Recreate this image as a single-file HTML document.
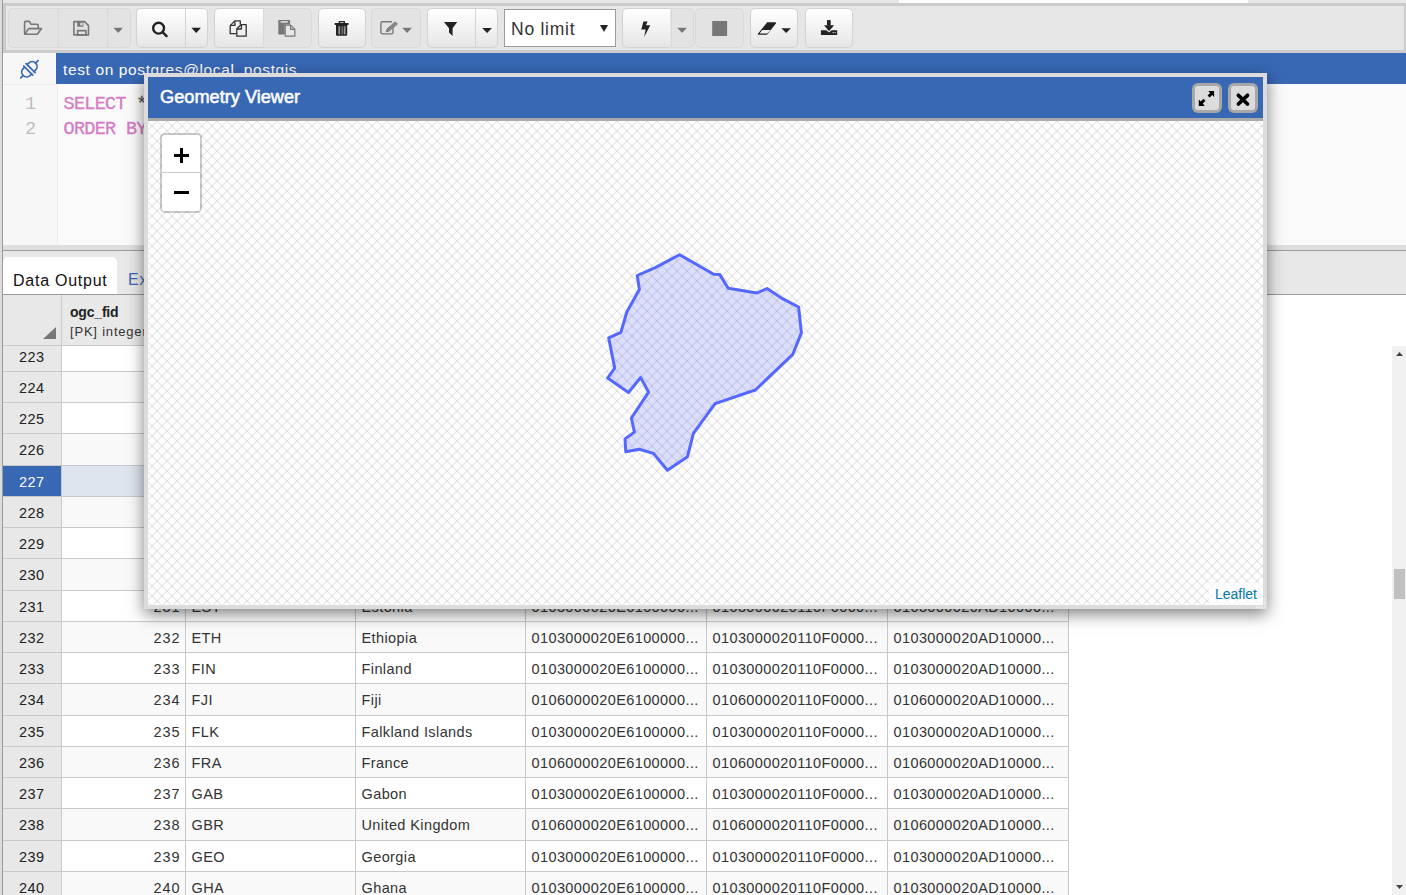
<!DOCTYPE html><html><head><meta charset='utf-8'><style>
*{box-sizing:border-box;margin:0;padding:0}
html,body{width:1406px;height:895px;overflow:hidden;background:#fff;font-family:"Liberation Sans",sans-serif;position:relative}
.a{position:absolute}
.btn{position:absolute;top:8px;height:39.5px;border:1px solid #d2d2d2;}
.en{background:linear-gradient(#ffffff,#e6e6e6);}
.dis{background:#e3e3e3;border-color:#d9d9d9}
.cell{position:absolute;height:31.25px;border-right:1px solid #c9c9c9;border-bottom:1px solid #c9c9c9;font-size:14.5px;color:#333;white-space:nowrap;overflow:hidden;line-height:32px;letter-spacing:0.4px}
</style></head><body><div class="a" style="left:0;top:0;width:1406px;height:3px;background:#e6e6e6"></div>
<div class="a" style="left:899px;top:0;width:349px;height:3px;background:#fff"></div>
<div class="a" style="left:0;top:0;width:2px;height:895px;background:#dcdcdc"></div>
<div class="a" style="left:2px;top:0;width:1px;height:895px;background:#9a9a9a"></div>
<div class="a" style="left:3px;top:3px;width:1403px;height:50px;background:#e6e6e6;border:3px solid #cbcbcb;border-right-width:2px"></div>
<div class="btn dis" style="left:8px;width:49.5px;border-radius:5px 0 0 5px;border-right:none"></div>
<div class="btn dis" style="left:57.5px;width:49.0px;border-radius:0;border-right:none"></div>
<div class="btn dis" style="left:106.5px;width:24.0px;border-radius:0 5px 5px 0;"></div>
<div class="btn en" style="left:136px;width:48.5px;border-radius:5px 0 0 5px;border-right:none"></div>
<div class="btn en" style="left:184.5px;width:23.5px;border-radius:0 5px 5px 0;"></div>
<div class="btn en" style="left:214px;width:48.5px;border-radius:5px 0 0 5px;border-right:none"></div>
<div class="btn dis" style="left:262.5px;width:49.0px;border-radius:0 5px 5px 0;"></div>
<div class="btn en" style="left:318px;width:48px;border-radius:5px;"></div>
<div class="btn dis" style="left:371px;width:49.5px;border-radius:5px;"></div>
<div class="btn en" style="left:426.5px;width:48.30000000000001px;border-radius:5px 0 0 5px;border-right:none"></div>
<div class="btn en" style="left:474.8px;width:23.399999999999977px;border-radius:0 5px 5px 0;"></div>
<div class="a" style="left:504px;top:9px;width:112px;height:38px;background:#fff;border:1px solid #9c9c9c"></div>
<div class="a" style="left:511px;top:18.7px;font-size:17.5px;line-height:20px;color:#333;letter-spacing:0.75px">No limit</div>
<svg class="a" style="left:600px;top:25px" width="8" height="7"><path d="M0 0H8L4 7Z" fill="#222"/></svg>
<div class="btn en" style="left:621.8px;width:48.700000000000045px;border-radius:5px 0 0 5px;border-right:none"></div>
<div class="btn dis" style="left:670.5px;width:23.700000000000045px;border-radius:0 5px 5px 0;"></div>
<div class="btn dis" style="left:695.4px;width:48.89999999999998px;border-radius:5px;"></div>
<div class="btn en" style="left:749.8px;width:48.30000000000007px;border-radius:5px;"></div>
<div class="btn en" style="left:804.9px;width:48.39999999999998px;border-radius:5px;"></div>
<svg class="a" style="left:0;top:0" width="1406" height="60" viewBox="0 0 1406 60">
<g fill="none" stroke="#777" stroke-width="1.6" stroke-linejoin="round" stroke-linecap="round">
 <path d="M24.6 33.6V22.6Q24.6 21.4 25.8 21.4H29.4L30.9 24.2H37Q38.2 24.2 38.2 25.4V28.2"/>
 <path d="M24.8 34.2L28.6 28.6H41.6L37.3 34.2Z"/>
 <path d="M73.9 21.6H84.6L88.5 25.6V34.9H73.9Z"/>
 <path d="M77.6 30.6H85.9V34.9H77.6Z"/>
</g>
<g fill="#777">
 <path d="M77.2 21.4H83.4V26.7H77.2ZM80.3 22.4V25.6H82.6V22.4Z" fill-rule="evenodd"/>
 <path d="M113.5 27.8H122.9L118.2 32.9Z"/>
 <path d="M402.3 27.8H411.9L407.1 32.9Z"/>
 <path d="M677.3 27.8H686.9L682.1 32.9Z"/>
 <rect x="712.2" y="21" width="14.9" height="15"/>
</g>
<g fill="#222">
 <path d="M191.4 27.8H201L196.2 32.9Z"/>
 <path d="M482.2 28H492L487.1 33Z"/>
 <path d="M781.4 28.2H790.9L786.15 32.9Z"/>
</g>
<g fill="none" stroke="#222" stroke-width="2.4" stroke-linecap="round">
 <circle cx="158.6" cy="28.2" r="5.4"/>
 <path d="M162.8 32.4L166.6 36.2"/>
</g>
<g fill="none" stroke="#333" stroke-width="1.3" stroke-linejoin="round">
 <path d="M236.4 33.7H230.2V25.6L234.8 20.9H240.3V24.6"/>
 <path d="M230.4 25.4H234.9V21"/>
 <path d="M236.8 28.8L241.3 24.6H246.2V36.2H236.8Z"/>
 <path d="M236.9 29H241.4V24.7"/>
</g>
<g>
 <path d="M278.3 20.6Q278.3 20.1 278.8 20.1H289.6Q290.1 20.1 290.1 20.6V24.6H284.7V34.5H278.8Q278.3 34.5 278.3 34Z" fill="#777"/>
 <rect x="280.7" y="21.1" width="7.2" height="1.6" fill="#ddd"/>
 <path d="M285.2 25.1H290.6L294.9 29.4V36.1H285.2Z" fill="#e6e6e6" stroke="#777" stroke-width="1.2" stroke-linejoin="round"/>
 <path d="M290.6 25.1V29.4H294.9" fill="none" stroke="#777" stroke-width="1.2"/>
</g>
<g fill="#222">
 <path d="M334.7 23H338.6V21.6Q338.6 21.1 339.1 21.1H344.5Q345 21.1 345 21.6V23H348.5V24.9H334.7Z"/>
 <rect x="340" y="22" width="3.6" height="1" fill="#bbb"/>
 <path d="M336 24.9H347.2V34.8Q347.2 35.8 346.2 35.8H337Q336 35.8 336 34.8Z"/>
 <rect x="338.4" y="26.2" width="1.7" height="8.2" fill="#999"/>
 <rect x="341.6" y="26.2" width="1" height="8.2" fill="#999"/>
 <rect x="343.8" y="26.2" width="1.7" height="8.2" fill="#999"/>
</g>
<g fill="none" stroke="#777" stroke-width="1.4" stroke-linecap="round" stroke-linejoin="round">
 <path d="M391.5 21.8H382.6Q380.9 21.8 380.9 23.5V32.2Q380.9 33.9 382.6 33.9H391.3Q393 33.9 393 32.2V28.8"/>
</g>
<path d="M386.2 31.9L387.1 28.8L395.3 21.9L397.4 24.1L389.2 31.0Z" fill="#888" stroke="#777" stroke-width="0.9" stroke-linejoin="round"/>
<path d="M444 22.1H457.2L452.6 28.2V35.9L449 32.4V28.2Z" fill="#222"/>
<path d="M643.4 21.4H647.6L646 25.3H650.3L644.1 36.9L645.6 29.4H641.3Z" fill="#222"/>
<path d="M767.2 22.3H775.2Q776.6 22.3 775.9 23.4L767 34.7H759Q757.3 34.7 758.1 33.6Z" fill="#222"/>
<path d="M762.3 29.9H770.8L767.1 33.5H759.5Z" fill="#f2f2f2"/>
<g fill="#222">
 <rect x="827" y="20.1" width="3.7" height="5.5"/>
 <path d="M824 25.2H834.1L829 31.2Z"/>
 <path d="M820.9 30.2H826.3L829 32.6L831.7 30.2H837.2V34.9H820.9Z"/>
 <rect x="832.6" y="32" width="1.2" height="1.2" fill="#ccc"/>
 <rect x="834.6" y="32" width="1.2" height="1.2" fill="#ccc"/>
</g>
</svg>
<div class="a" style="left:3px;top:53px;width:1403px;height:192px;background:#fafafa"></div>
<div class="a" style="left:3px;top:53px;width:55px;height:192px;background:#f7f7f7;border-right:1px solid #ececec"></div>
<div class="a" style="left:56px;top:53px;width:1350px;height:31px;background:#3867b4"></div>
<div class="a" style="left:63px;top:60px;font-size:15.5px;color:#fff;letter-spacing:0.62px;line-height:20px">test on postgres@local_postgis</div>
<div class="a" style="left:3px;top:84px;width:54px;height:1px;background:#ececec"></div>
<div class="a" style="left:25px;top:91.5px;font-family:'Liberation Mono';font-size:18.5px;line-height:25px;color:#bdbdbd">1<br>2</div>
<div class="a" style="left:63.5px;top:91.5px;font-family:'Liberation Mono';font-size:18.5px;letter-spacing:-0.7px;line-height:25px;color:#d57ac5;-webkit-text-stroke:0.3px #d57ac5;white-space:pre">SELECT <span style="color:#555;-webkit-text-stroke:0.3px #555">*</span><br>ORDER BY</div>
<svg class="a" style="left:15px;top:55px" width="30" height="30" viewBox="15 55 30 30">
<g transform="translate(29.4,69.3) rotate(-45)" fill="none" stroke="#3867b4" stroke-width="1.7" stroke-linecap="round">
 <path d="M1.7 -4.9H3.9A4.9 4.9 0 0 1 3.9 4.9H1.7"/>
 <path d="M-1.7 -4.9H-3.9A4.9 4.9 0 0 0 -3.9 4.9H-1.7"/>
 <path d="M1.7 -6.4V6.4M-1.7 -6.4V6.4"/>
 <path d="M8.8 0H12.2M-8.8 0H-12.2"/>
</g></svg>
<div class="a" style="left:3px;top:245px;width:1403px;height:5px;background:#dedede"></div>
<div class="a" style="left:3px;top:250px;width:1403px;height:1px;background:#9a9a9a"></div>
<div class="a" style="left:3px;top:251px;width:1403px;height:43px;background:#e8e8e8"></div>
<div class="a" style="left:3px;top:257px;width:114px;height:37px;background:#fff;border-radius:5px 5px 0 0"></div>
<div class="a" style="left:13px;top:270.8px;font-size:16px;color:#111;letter-spacing:0.75px;line-height:20px">Data Output</div>
<div class="a" style="left:128px;top:269.5px;font-size:16px;color:#3867b4;letter-spacing:0.75px;line-height:20px">Explain</div>
<div class="a" style="left:3px;top:294px;width:1403px;height:1px;background:#9a9a9a"></div>
<div class="a" style="left:3px;top:295px;width:1065.5px;height:50.5px;background:#e8e8e8;border-bottom:1px solid #c9c9c9"></div>
<div class="a" style="left:61px;top:295px;width:1px;height:50px;background:#c9c9c9"></div>
<div class="a" style="left:185px;top:295px;width:1px;height:50px;background:#c9c9c9"></div>
<div class="a" style="left:355px;top:295px;width:1px;height:50px;background:#c9c9c9"></div>
<div class="a" style="left:525px;top:295px;width:1px;height:50px;background:#c9c9c9"></div>
<div class="a" style="left:706px;top:295px;width:1px;height:50px;background:#c9c9c9"></div>
<div class="a" style="left:887px;top:295px;width:1px;height:50px;background:#c9c9c9"></div>
<div class="a" style="left:1068px;top:295px;width:1px;height:50px;background:#c9c9c9"></div>
<svg class="a" style="left:43px;top:327px" width="13" height="12"><path d="M13 0V12H0Z" fill="#777"/></svg>
<div class="a" style="left:70px;top:303px;font-size:14px;font-weight:bold;color:#222;line-height:18px;letter-spacing:-0.2px">ogc_fid</div>
<div class="a" style="left:70px;top:323px;font-size:13px;color:#333;line-height:18px;letter-spacing:0.8px">[PK] integer</div>
<div class="a" style="left:3px;top:346px;width:1066px;height:549px;overflow:hidden">
<div class="cell" style="left:0;top:-5.399999999999977px;width:58.5px;background:#e8e8e8;color:#222;text-align:center">223</div>
<div class="cell" style="left:58.5px;top:-5.399999999999977px;width:124.0px;background:#fff;text-align:right;padding-right:4px;letter-spacing:0.9px"></div>
<div class="cell" style="left:182.5px;top:-5.399999999999977px;width:170.0px;background:#fff;text-align:left;padding-left:6px"></div>
<div class="cell" style="left:352.5px;top:-5.399999999999977px;width:170.0px;background:#fff;text-align:left;padding-left:6px"></div>
<div class="cell" style="left:522.5px;top:-5.399999999999977px;width:181.0px;background:#fff;text-align:left;padding-left:6px"></div>
<div class="cell" style="left:703.5px;top:-5.399999999999977px;width:181.0px;background:#fff;text-align:left;padding-left:6px"></div>
<div class="cell" style="left:884.5px;top:-5.399999999999977px;width:181.0px;background:#fff;text-align:left;padding-left:6px"></div>
<div class="cell" style="left:0;top:25.850000000000023px;width:58.5px;background:#e8e8e8;color:#222;text-align:center">224</div>
<div class="cell" style="left:58.5px;top:25.850000000000023px;width:124.0px;background:#f9f9f9;text-align:right;padding-right:4px;letter-spacing:0.9px"></div>
<div class="cell" style="left:182.5px;top:25.850000000000023px;width:170.0px;background:#f9f9f9;text-align:left;padding-left:6px"></div>
<div class="cell" style="left:352.5px;top:25.850000000000023px;width:170.0px;background:#f9f9f9;text-align:left;padding-left:6px"></div>
<div class="cell" style="left:522.5px;top:25.850000000000023px;width:181.0px;background:#f9f9f9;text-align:left;padding-left:6px"></div>
<div class="cell" style="left:703.5px;top:25.850000000000023px;width:181.0px;background:#f9f9f9;text-align:left;padding-left:6px"></div>
<div class="cell" style="left:884.5px;top:25.850000000000023px;width:181.0px;background:#f9f9f9;text-align:left;padding-left:6px"></div>
<div class="cell" style="left:0;top:57.10000000000002px;width:58.5px;background:#e8e8e8;color:#222;text-align:center">225</div>
<div class="cell" style="left:58.5px;top:57.10000000000002px;width:124.0px;background:#fff;text-align:right;padding-right:4px;letter-spacing:0.9px"></div>
<div class="cell" style="left:182.5px;top:57.10000000000002px;width:170.0px;background:#fff;text-align:left;padding-left:6px"></div>
<div class="cell" style="left:352.5px;top:57.10000000000002px;width:170.0px;background:#fff;text-align:left;padding-left:6px"></div>
<div class="cell" style="left:522.5px;top:57.10000000000002px;width:181.0px;background:#fff;text-align:left;padding-left:6px"></div>
<div class="cell" style="left:703.5px;top:57.10000000000002px;width:181.0px;background:#fff;text-align:left;padding-left:6px"></div>
<div class="cell" style="left:884.5px;top:57.10000000000002px;width:181.0px;background:#fff;text-align:left;padding-left:6px"></div>
<div class="cell" style="left:0;top:88.35000000000002px;width:58.5px;background:#e8e8e8;color:#222;text-align:center">226</div>
<div class="cell" style="left:58.5px;top:88.35000000000002px;width:124.0px;background:#f9f9f9;text-align:right;padding-right:4px;letter-spacing:0.9px"></div>
<div class="cell" style="left:182.5px;top:88.35000000000002px;width:170.0px;background:#f9f9f9;text-align:left;padding-left:6px"></div>
<div class="cell" style="left:352.5px;top:88.35000000000002px;width:170.0px;background:#f9f9f9;text-align:left;padding-left:6px"></div>
<div class="cell" style="left:522.5px;top:88.35000000000002px;width:181.0px;background:#f9f9f9;text-align:left;padding-left:6px"></div>
<div class="cell" style="left:703.5px;top:88.35000000000002px;width:181.0px;background:#f9f9f9;text-align:left;padding-left:6px"></div>
<div class="cell" style="left:884.5px;top:88.35000000000002px;width:181.0px;background:#f9f9f9;text-align:left;padding-left:6px"></div>
<div class="cell" style="left:0;top:119.60000000000002px;width:58.5px;background:#3867b4;color:#fff;text-align:center">227</div>
<div class="cell" style="left:58.5px;top:119.60000000000002px;width:124.0px;background:#dfe5ef;text-align:right;padding-right:4px;letter-spacing:0.9px"></div>
<div class="cell" style="left:182.5px;top:119.60000000000002px;width:170.0px;background:#dfe5ef;text-align:left;padding-left:6px"></div>
<div class="cell" style="left:352.5px;top:119.60000000000002px;width:170.0px;background:#dfe5ef;text-align:left;padding-left:6px"></div>
<div class="cell" style="left:522.5px;top:119.60000000000002px;width:181.0px;background:#dfe5ef;text-align:left;padding-left:6px"></div>
<div class="cell" style="left:703.5px;top:119.60000000000002px;width:181.0px;background:#dfe5ef;text-align:left;padding-left:6px"></div>
<div class="cell" style="left:884.5px;top:119.60000000000002px;width:181.0px;background:#dfe5ef;text-align:left;padding-left:6px"></div>
<div class="cell" style="left:0;top:150.85000000000002px;width:58.5px;background:#e8e8e8;color:#222;text-align:center">228</div>
<div class="cell" style="left:58.5px;top:150.85000000000002px;width:124.0px;background:#f9f9f9;text-align:right;padding-right:4px;letter-spacing:0.9px"></div>
<div class="cell" style="left:182.5px;top:150.85000000000002px;width:170.0px;background:#f9f9f9;text-align:left;padding-left:6px"></div>
<div class="cell" style="left:352.5px;top:150.85000000000002px;width:170.0px;background:#f9f9f9;text-align:left;padding-left:6px"></div>
<div class="cell" style="left:522.5px;top:150.85000000000002px;width:181.0px;background:#f9f9f9;text-align:left;padding-left:6px"></div>
<div class="cell" style="left:703.5px;top:150.85000000000002px;width:181.0px;background:#f9f9f9;text-align:left;padding-left:6px"></div>
<div class="cell" style="left:884.5px;top:150.85000000000002px;width:181.0px;background:#f9f9f9;text-align:left;padding-left:6px"></div>
<div class="cell" style="left:0;top:182.10000000000002px;width:58.5px;background:#e8e8e8;color:#222;text-align:center">229</div>
<div class="cell" style="left:58.5px;top:182.10000000000002px;width:124.0px;background:#fff;text-align:right;padding-right:4px;letter-spacing:0.9px"></div>
<div class="cell" style="left:182.5px;top:182.10000000000002px;width:170.0px;background:#fff;text-align:left;padding-left:6px"></div>
<div class="cell" style="left:352.5px;top:182.10000000000002px;width:170.0px;background:#fff;text-align:left;padding-left:6px"></div>
<div class="cell" style="left:522.5px;top:182.10000000000002px;width:181.0px;background:#fff;text-align:left;padding-left:6px"></div>
<div class="cell" style="left:703.5px;top:182.10000000000002px;width:181.0px;background:#fff;text-align:left;padding-left:6px"></div>
<div class="cell" style="left:884.5px;top:182.10000000000002px;width:181.0px;background:#fff;text-align:left;padding-left:6px"></div>
<div class="cell" style="left:0;top:213.35000000000002px;width:58.5px;background:#e8e8e8;color:#222;text-align:center">230</div>
<div class="cell" style="left:58.5px;top:213.35000000000002px;width:124.0px;background:#f9f9f9;text-align:right;padding-right:4px;letter-spacing:0.9px"></div>
<div class="cell" style="left:182.5px;top:213.35000000000002px;width:170.0px;background:#f9f9f9;text-align:left;padding-left:6px"></div>
<div class="cell" style="left:352.5px;top:213.35000000000002px;width:170.0px;background:#f9f9f9;text-align:left;padding-left:6px"></div>
<div class="cell" style="left:522.5px;top:213.35000000000002px;width:181.0px;background:#f9f9f9;text-align:left;padding-left:6px"></div>
<div class="cell" style="left:703.5px;top:213.35000000000002px;width:181.0px;background:#f9f9f9;text-align:left;padding-left:6px"></div>
<div class="cell" style="left:884.5px;top:213.35000000000002px;width:181.0px;background:#f9f9f9;text-align:left;padding-left:6px"></div>
<div class="cell" style="left:0;top:244.60000000000002px;width:58.5px;background:#e8e8e8;color:#222;text-align:center">231</div>
<div class="cell" style="left:58.5px;top:244.60000000000002px;width:124.0px;background:#fff;text-align:right;padding-right:4px;letter-spacing:0.9px">231</div>
<div class="cell" style="left:182.5px;top:244.60000000000002px;width:170.0px;background:#fff;text-align:left;padding-left:6px">EST</div>
<div class="cell" style="left:352.5px;top:244.60000000000002px;width:170.0px;background:#fff;text-align:left;padding-left:6px">Estonia</div>
<div class="cell" style="left:522.5px;top:244.60000000000002px;width:181.0px;background:#fff;text-align:left;padding-left:6px">0103000020E6100000...</div>
<div class="cell" style="left:703.5px;top:244.60000000000002px;width:181.0px;background:#fff;text-align:left;padding-left:6px">0103000020110F0000...</div>
<div class="cell" style="left:884.5px;top:244.60000000000002px;width:181.0px;background:#fff;text-align:left;padding-left:6px">0103000020AD10000...</div>
<div class="cell" style="left:0;top:275.85px;width:58.5px;background:#e8e8e8;color:#222;text-align:center">232</div>
<div class="cell" style="left:58.5px;top:275.85px;width:124.0px;background:#f9f9f9;text-align:right;padding-right:4px;letter-spacing:0.9px">232</div>
<div class="cell" style="left:182.5px;top:275.85px;width:170.0px;background:#f9f9f9;text-align:left;padding-left:6px">ETH</div>
<div class="cell" style="left:352.5px;top:275.85px;width:170.0px;background:#f9f9f9;text-align:left;padding-left:6px">Ethiopia</div>
<div class="cell" style="left:522.5px;top:275.85px;width:181.0px;background:#f9f9f9;text-align:left;padding-left:6px">0103000020E6100000...</div>
<div class="cell" style="left:703.5px;top:275.85px;width:181.0px;background:#f9f9f9;text-align:left;padding-left:6px">0103000020110F0000...</div>
<div class="cell" style="left:884.5px;top:275.85px;width:181.0px;background:#f9f9f9;text-align:left;padding-left:6px">0103000020AD10000...</div>
<div class="cell" style="left:0;top:307.1px;width:58.5px;background:#e8e8e8;color:#222;text-align:center">233</div>
<div class="cell" style="left:58.5px;top:307.1px;width:124.0px;background:#fff;text-align:right;padding-right:4px;letter-spacing:0.9px">233</div>
<div class="cell" style="left:182.5px;top:307.1px;width:170.0px;background:#fff;text-align:left;padding-left:6px">FIN</div>
<div class="cell" style="left:352.5px;top:307.1px;width:170.0px;background:#fff;text-align:left;padding-left:6px">Finland</div>
<div class="cell" style="left:522.5px;top:307.1px;width:181.0px;background:#fff;text-align:left;padding-left:6px">0103000020E6100000...</div>
<div class="cell" style="left:703.5px;top:307.1px;width:181.0px;background:#fff;text-align:left;padding-left:6px">0103000020110F0000...</div>
<div class="cell" style="left:884.5px;top:307.1px;width:181.0px;background:#fff;text-align:left;padding-left:6px">0103000020AD10000...</div>
<div class="cell" style="left:0;top:338.35px;width:58.5px;background:#e8e8e8;color:#222;text-align:center">234</div>
<div class="cell" style="left:58.5px;top:338.35px;width:124.0px;background:#f9f9f9;text-align:right;padding-right:4px;letter-spacing:0.9px">234</div>
<div class="cell" style="left:182.5px;top:338.35px;width:170.0px;background:#f9f9f9;text-align:left;padding-left:6px">FJI</div>
<div class="cell" style="left:352.5px;top:338.35px;width:170.0px;background:#f9f9f9;text-align:left;padding-left:6px">Fiji</div>
<div class="cell" style="left:522.5px;top:338.35px;width:181.0px;background:#f9f9f9;text-align:left;padding-left:6px">0106000020E6100000...</div>
<div class="cell" style="left:703.5px;top:338.35px;width:181.0px;background:#f9f9f9;text-align:left;padding-left:6px">0106000020110F0000...</div>
<div class="cell" style="left:884.5px;top:338.35px;width:181.0px;background:#f9f9f9;text-align:left;padding-left:6px">0106000020AD10000...</div>
<div class="cell" style="left:0;top:369.6px;width:58.5px;background:#e8e8e8;color:#222;text-align:center">235</div>
<div class="cell" style="left:58.5px;top:369.6px;width:124.0px;background:#fff;text-align:right;padding-right:4px;letter-spacing:0.9px">235</div>
<div class="cell" style="left:182.5px;top:369.6px;width:170.0px;background:#fff;text-align:left;padding-left:6px">FLK</div>
<div class="cell" style="left:352.5px;top:369.6px;width:170.0px;background:#fff;text-align:left;padding-left:6px">Falkland Islands</div>
<div class="cell" style="left:522.5px;top:369.6px;width:181.0px;background:#fff;text-align:left;padding-left:6px">0103000020E6100000...</div>
<div class="cell" style="left:703.5px;top:369.6px;width:181.0px;background:#fff;text-align:left;padding-left:6px">0103000020110F0000...</div>
<div class="cell" style="left:884.5px;top:369.6px;width:181.0px;background:#fff;text-align:left;padding-left:6px">0103000020AD10000...</div>
<div class="cell" style="left:0;top:400.85px;width:58.5px;background:#e8e8e8;color:#222;text-align:center">236</div>
<div class="cell" style="left:58.5px;top:400.85px;width:124.0px;background:#f9f9f9;text-align:right;padding-right:4px;letter-spacing:0.9px">236</div>
<div class="cell" style="left:182.5px;top:400.85px;width:170.0px;background:#f9f9f9;text-align:left;padding-left:6px">FRA</div>
<div class="cell" style="left:352.5px;top:400.85px;width:170.0px;background:#f9f9f9;text-align:left;padding-left:6px">France</div>
<div class="cell" style="left:522.5px;top:400.85px;width:181.0px;background:#f9f9f9;text-align:left;padding-left:6px">0106000020E6100000...</div>
<div class="cell" style="left:703.5px;top:400.85px;width:181.0px;background:#f9f9f9;text-align:left;padding-left:6px">0106000020110F0000...</div>
<div class="cell" style="left:884.5px;top:400.85px;width:181.0px;background:#f9f9f9;text-align:left;padding-left:6px">0106000020AD10000...</div>
<div class="cell" style="left:0;top:432.1px;width:58.5px;background:#e8e8e8;color:#222;text-align:center">237</div>
<div class="cell" style="left:58.5px;top:432.1px;width:124.0px;background:#fff;text-align:right;padding-right:4px;letter-spacing:0.9px">237</div>
<div class="cell" style="left:182.5px;top:432.1px;width:170.0px;background:#fff;text-align:left;padding-left:6px">GAB</div>
<div class="cell" style="left:352.5px;top:432.1px;width:170.0px;background:#fff;text-align:left;padding-left:6px">Gabon</div>
<div class="cell" style="left:522.5px;top:432.1px;width:181.0px;background:#fff;text-align:left;padding-left:6px">0103000020E6100000...</div>
<div class="cell" style="left:703.5px;top:432.1px;width:181.0px;background:#fff;text-align:left;padding-left:6px">0103000020110F0000...</div>
<div class="cell" style="left:884.5px;top:432.1px;width:181.0px;background:#fff;text-align:left;padding-left:6px">0103000020AD10000...</div>
<div class="cell" style="left:0;top:463.35px;width:58.5px;background:#e8e8e8;color:#222;text-align:center">238</div>
<div class="cell" style="left:58.5px;top:463.35px;width:124.0px;background:#f9f9f9;text-align:right;padding-right:4px;letter-spacing:0.9px">238</div>
<div class="cell" style="left:182.5px;top:463.35px;width:170.0px;background:#f9f9f9;text-align:left;padding-left:6px">GBR</div>
<div class="cell" style="left:352.5px;top:463.35px;width:170.0px;background:#f9f9f9;text-align:left;padding-left:6px">United Kingdom</div>
<div class="cell" style="left:522.5px;top:463.35px;width:181.0px;background:#f9f9f9;text-align:left;padding-left:6px">0106000020E6100000...</div>
<div class="cell" style="left:703.5px;top:463.35px;width:181.0px;background:#f9f9f9;text-align:left;padding-left:6px">0106000020110F0000...</div>
<div class="cell" style="left:884.5px;top:463.35px;width:181.0px;background:#f9f9f9;text-align:left;padding-left:6px">0106000020AD10000...</div>
<div class="cell" style="left:0;top:494.6px;width:58.5px;background:#e8e8e8;color:#222;text-align:center">239</div>
<div class="cell" style="left:58.5px;top:494.6px;width:124.0px;background:#fff;text-align:right;padding-right:4px;letter-spacing:0.9px">239</div>
<div class="cell" style="left:182.5px;top:494.6px;width:170.0px;background:#fff;text-align:left;padding-left:6px">GEO</div>
<div class="cell" style="left:352.5px;top:494.6px;width:170.0px;background:#fff;text-align:left;padding-left:6px">Georgia</div>
<div class="cell" style="left:522.5px;top:494.6px;width:181.0px;background:#fff;text-align:left;padding-left:6px">0103000020E6100000...</div>
<div class="cell" style="left:703.5px;top:494.6px;width:181.0px;background:#fff;text-align:left;padding-left:6px">0103000020110F0000...</div>
<div class="cell" style="left:884.5px;top:494.6px;width:181.0px;background:#fff;text-align:left;padding-left:6px">0103000020AD10000...</div>
<div class="cell" style="left:0;top:525.85px;width:58.5px;background:#e8e8e8;color:#222;text-align:center">240</div>
<div class="cell" style="left:58.5px;top:525.85px;width:124.0px;background:#f9f9f9;text-align:right;padding-right:4px;letter-spacing:0.9px">240</div>
<div class="cell" style="left:182.5px;top:525.85px;width:170.0px;background:#f9f9f9;text-align:left;padding-left:6px">GHA</div>
<div class="cell" style="left:352.5px;top:525.85px;width:170.0px;background:#f9f9f9;text-align:left;padding-left:6px">Ghana</div>
<div class="cell" style="left:522.5px;top:525.85px;width:181.0px;background:#f9f9f9;text-align:left;padding-left:6px">0103000020E6100000...</div>
<div class="cell" style="left:703.5px;top:525.85px;width:181.0px;background:#f9f9f9;text-align:left;padding-left:6px">0103000020110F0000...</div>
<div class="cell" style="left:884.5px;top:525.85px;width:181.0px;background:#f9f9f9;text-align:left;padding-left:6px">0103000020AD10000...</div>
</div>
<div class="a" style="left:1392px;top:346px;width:14px;height:549px;background:#f0f0f0"></div>
<svg class="a" style="left:1396px;top:352px" width="7" height="4"><path d="M0 4H7L3.5 0Z" fill="#444"/></svg>
<svg class="a" style="left:1396px;top:885px" width="7" height="4"><path d="M0 0H7L3.5 4Z" fill="#444"/></svg>
<div class="a" style="left:1394px;top:569px;width:11px;height:30px;background:#c1c1c1"></div>
<div class="a" style="left:144px;top:73px;width:1123px;height:536px;background:#dcdcdc;box-shadow:0 5px 15px rgba(0,0,0,0.5)"></div>
<div class="a" style="left:148px;top:77px;width:1115px;height:41px;background:#3867b4"></div>
<div class="a" style="left:160px;top:85px;font-size:18.2px;color:#fff;line-height:24px;-webkit-text-stroke:0.55px #fff">Geometry Viewer</div>
<div class="a" style="left:148px;top:118px;width:1115px;height:3px;background:#aaaaaa"></div>
<div class="a" style="left:1192px;top:83px;width:29.5px;height:29.5px;border:3px solid #a8a8a8;border-radius:6px;background:#dcdcdc"></div>
<div class="a" style="left:1228px;top:83px;width:29.5px;height:29.5px;border:3px solid #a8a8a8;border-radius:6px;background:#dcdcdc"></div>
<svg class="a" style="left:1180px;top:70px" width="90" height="50" viewBox="1180 70 90 50">
<g fill="#000">
 <path d="M1208.2 91H1214.1V96.9L1212.2 95L1209.6 97.6L1207.5 95.5L1210.1 92.9Z"/>
 <path d="M1198.8 99.5L1200.7 101.4L1203.4 98.7L1205.5 100.8L1202.8 103.5L1204.7 105.9H1198.8Z"/>
</g>
<path d="M1238.4 95.3L1247.5 104M1247.5 95.3L1238.4 104" stroke="#000" stroke-width="3.7" stroke-linecap="round"/>
</svg>
<svg class="a" style="left:1255px;top:597px" width="12" height="12"><g fill="#eeeeee"><rect x="1" y="9.5" width="1.5" height="2"/><rect x="3.5" y="9.5" width="1.5" height="2"/><rect x="6" y="9.5" width="1.5" height="2"/><rect x="8.5" y="9.5" width="1.5" height="2"/><rect x="9" y="1" width="1.5" height="1.5"/><rect x="9" y="4" width="1.5" height="1.5"/><rect x="9" y="6.5" width="1.5" height="1.5"/></g></svg>
<div class="a" style="left:148px;top:121px;width:1115px;height:484px;background:#fff;overflow:hidden">
<svg width="1115" height="484" style="position:absolute;left:0;top:0">
<defs><pattern id="h" x="4" y="5" width="10" height="10" patternUnits="userSpaceOnUse"><path d="M-10 -10L20 20M-10 0L10 20M0 -10L20 10" stroke="rgba(0,0,0,0.085)" stroke-width="1.3" fill="none"/><path d="M-10 20L20 -10M-10 10L10 -10M0 20L20 0" stroke="rgba(0,0,0,0.085)" stroke-width="1.3" fill="none"/></pattern></defs>
<rect width="1115" height="484" fill="url(#h)"/>
</svg>
<svg width="1115" height="484" style="position:absolute;left:0;top:0"><g transform="translate(-148,-121)"><polygon points="679.6,254.7 655.3,267.6 637.2,275.5 639.4,289.4 626.8,312 620.9,332.4 608.7,337.9 614.7,368.1 607.6,378 628.5,392.6 640.6,377.5 648.6,392.1 631.4,418 634.4,432.1 625,438.9 625.8,451.8 639.3,449.3 653.5,453.4 667.4,470.2 687.5,456.7 693.4,433.3 715.1,403.6 755.3,390 792.6,354.7 801.4,332.9 798.6,307 783,298.9 767.1,288.5 757,293 728.2,288.2 719.8,274.6 713.7,274.3" fill="rgba(51,68,255,0.17)" stroke="#5468ff" stroke-width="3" stroke-linejoin="round"/></g></svg>
<div style="position:absolute;left:12px;top:12px;width:42px;height:79.5px;border:2px solid rgba(0,0,0,0.2);border-radius:5px;background-clip:padding-box">
 <div style="position:absolute;left:0;top:0;width:38px;height:38px;background:#fff;border-bottom:1px solid #ccc;border-radius:3px 3px 0 0"></div>
 <div style="position:absolute;left:0;top:38px;width:38px;height:37.5px;background:#fff;border-radius:0 0 3px 3px"></div>
 <div style="position:absolute;left:11.6px;top:18.9px;width:15px;height:3px;background:#000"></div>
 <div style="position:absolute;left:17.7px;top:12.6px;width:3.2px;height:15.4px;background:#000"></div>
 <div style="position:absolute;left:11.6px;top:55.8px;width:15px;height:3.4px;background:#000"></div>
</div>
<div style="position:absolute;right:0;bottom:0;padding:0 6px 0 6px;height:22px;background:rgba(255,255,255,0.7);font-size:14px;line-height:22px;color:#0078a8">Leaflet</div>

</div></body></html>
